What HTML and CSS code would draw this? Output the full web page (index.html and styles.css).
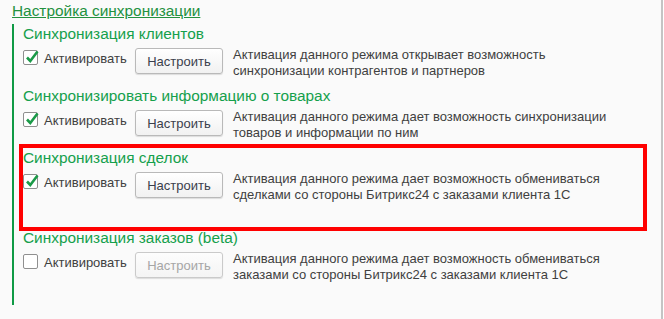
FILE: index.html
```html
<!DOCTYPE html>
<html>
<head>
    <meta charset="utf-8">
    <link rel="stylesheet" href="styles.css">
</head>
<body>
    <div class="page">
        <div class="title">Настройка синхронизации</div>

        <div class="group">
            <!-- Клиенты -->
            <div class="section">
                <div class="section-title">Синхронизация клиентов</div>
                <div class="row">
                    <label class="check">
                        <span class="box checked">
                            <svg width="15" height="15" viewBox="0 0 15 15"><path d="M3 7.5 L6.3 11 L13.5 1.5" fill="none" stroke="#1b9a48" stroke-width="2.6"/></svg>
                        </span>
                        <span class="check-label">Активировать</span>
                    </label>
                    <button class="btn">Настроить</button>
                    <div class="hint">Активация данного режима открывает возможность<br>синхронизации контрагентов и партнеров</div>
                </div>
            </div>

            <!-- Товары -->
            <div class="section">
                <div class="section-title">Синхронизировать информацию о товарах</div>
                <div class="row">
                    <label class="check">
                        <span class="box checked">
                            <svg width="15" height="15" viewBox="0 0 15 15"><path d="M3 7.5 L6.3 11 L13.5 1.5" fill="none" stroke="#1b9a48" stroke-width="2.6"/></svg>
                        </span>
                        <span class="check-label">Активировать</span>
                    </label>
                    <button class="btn">Настроить</button>
                    <div class="hint">Активация данного режима дает возможность синхронизации<br>товаров и информации по ним</div>
                </div>
            </div>

            <!-- Сделки (выделено) -->
            <div class="section marked">
                <div class="section-title">Синхронизация сделок</div>
                <div class="row">
                    <label class="check">
                        <span class="box checked">
                            <svg width="15" height="15" viewBox="0 0 15 15"><path d="M3 7.5 L6.3 11 L13.5 1.5" fill="none" stroke="#1b9a48" stroke-width="2.6"/></svg>
                        </span>
                        <span class="check-label">Активировать</span>
                    </label>
                    <button class="btn">Настроить</button>
                    <div class="hint">Активация данного режима дает возможность обмениваться<br>сделками со стороны Битрикс24 с заказами клиента 1С</div>
                </div>
            </div>

            <!-- Заказы -->
            <div class="section">
                <div class="section-title">Синхронизация заказов (beta)</div>
                <div class="row">
                    <label class="check">
                        <span class="box"></span>
                        <span class="check-label">Активировать</span>
                    </label>
                    <button class="btn" disabled>Настроить</button>
                    <div class="hint">Активация данного режима дает возможность обмениваться<br>заказами со стороны Битрикс24 с заказами клиента 1С</div>
                </div>
            </div>
        </div>
    </div>
</body>
</html>
```

FILE: styles.css
```css
html {
    background: #ffffff;
}

body {
    margin: 0;
    width: 661px;
    height: 319px;
    background: #fafafa;
    border-right: 2px solid #c4c4c4;
    font-family: "Liberation Sans", Arial, sans-serif;
    color: #404040;
}

.page {
    padding: 1px 0 0 12px;
}

.title {
    font-size: 15.4px;
    line-height: 20px;
    color: #23913f;
    text-decoration: underline;
    display: inline-block;
}

.group {
    margin-top: 3px;
    border-left: 2px solid #0f9a45;
    padding: 0 0 15px 9px;
}

.section {
    margin-bottom: 7px;
}

.section.marked {
    position: relative;
    margin-bottom: 25px;
}

/* red annotation frame drawn over the block */
.section.marked::after {
    content: '';
    position: absolute;
    top: -4px;
    left: -4px;
    right: 14px;
    bottom: -28px;
    border: 4px solid #ff0000;
    pointer-events: none;
}

.section-title {
    font-size: 15.4px;
    line-height: 20px;
    color: #15a04c;
}

.row {
    display: flex;
    align-items: flex-start;
    margin-top: 3px;
}

.check {
    display: flex;
    align-items: flex-start;
    gap: 6px;
    margin-top: 3px;
    width: 101px;
    margin-right: 11px;
}

.box {
    width: 13px;
    height: 13px;
    border: 1px solid #8f8f8f;
    border-radius: 2px;
    background: #ffffff;
    position: relative;
    flex-shrink: 0;
}

.box svg {
    position: absolute;
    top: -1px;
    left: 0;
}

.check-label {
    font-size: 13px;
    line-height: 16px;
    margin-top: 1px;
    color: #404040;
}

.btn {
    width: 88px;
    height: 26px;
    margin-top: 1px;
    margin-right: 10px;
    padding: 0;
    border: 1px solid #b9b9b9;
    border-radius: 3px;
    background: linear-gradient(#ffffff, #f1f1f1);
    box-shadow: 0 1px 1px rgba(0, 0, 0, 0.12);
    font-family: "Liberation Sans", Arial, sans-serif;
    font-size: 13px;
    color: #3b3f4c;
    flex-shrink: 0;
}

.btn:disabled {
    color: #a6a6a6;
    background: linear-gradient(#fdfdfd, #f4f4f4);
    border-color: #cacaca;
}

.hint {
    font-size: 13px;
    line-height: 16px;
    white-space: nowrap;
    color: #404040;
}
```
